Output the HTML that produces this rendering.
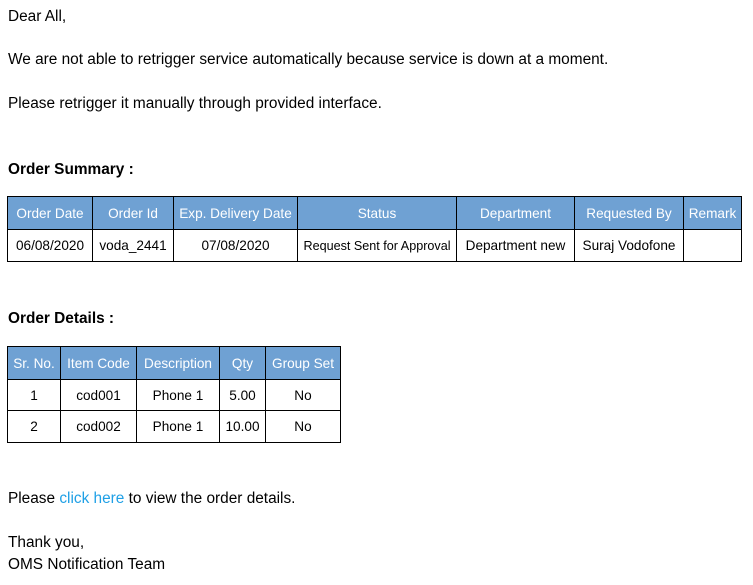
<!DOCTYPE html>
<html><head><style>
body{margin:0;width:753px;height:585px;background:#fff;font-family:"Liberation Sans",sans-serif;font-size:15.4px;color:#000;position:relative;overflow:hidden}
.t{position:absolute;left:8px;white-space:nowrap;line-height:18px}
table{position:absolute;border-collapse:collapse;table-layout:fixed;font-size:13.6px}
td,th{border:1px solid #000;text-align:center;padding:0;white-space:nowrap;overflow:hidden;font-weight:normal}
th{background:#6fa1d3;color:#fff}
a{color:#1fa0e6;text-decoration:none}
</style></head><body>
<div class="t" style="top:8px">Dear All,</div>
<div class="t" style="top:51px">We are not able to retrigger service automatically because service is down at a moment.</div>
<div class="t" style="top:95px">Please retrigger it manually through provided interface.</div>
<div class="t" style="top:161px;font-weight:bold">Order Summary :</div>
<table style="left:7px;top:196px;width:734px">
<colgroup><col style="width:85px"><col style="width:81px"><col style="width:124px"><col style="width:159px"><col style="width:118px"><col style="width:109px"><col style="width:58px"></colgroup>
<tr style="height:33px"><th>Order Date</th><th>Order Id</th><th>Exp. Delivery Date</th><th>Status</th><th>Department</th><th>Requested By</th><th>Remark</th></tr>
<tr style="height:32px"><td>06/08/2020</td><td>voda_2441</td><td>07/08/2020</td><td style="font-size:12.6px">Request Sent for Approval</td><td>Department new</td><td>Suraj Vodofone</td><td></td></tr>
</table>
<div class="t" style="top:310px;font-weight:bold">Order Details :</div>
<table style="left:7px;top:346px;width:333px">
<colgroup><col style="width:53px"><col style="width:76px"><col style="width:83px"><col style="width:46px"><col style="width:75px"></colgroup>
<tr style="height:33px"><th>Sr. No.</th><th>Item Code</th><th>Description</th><th>Qty</th><th>Group Set</th></tr>
<tr style="height:31px"><td>1</td><td>cod001</td><td>Phone 1</td><td>5.00</td><td>No</td></tr>
<tr style="height:32px"><td>2</td><td>cod002</td><td>Phone 1</td><td>10.00</td><td>No</td></tr>
</table>
<div class="t" style="top:490px">Please <a>click here</a> to view the order details.</div>
<div class="t" style="top:534px">Thank you,</div>
<div class="t" style="top:556px">OMS Notification Team</div>
</body></html>
